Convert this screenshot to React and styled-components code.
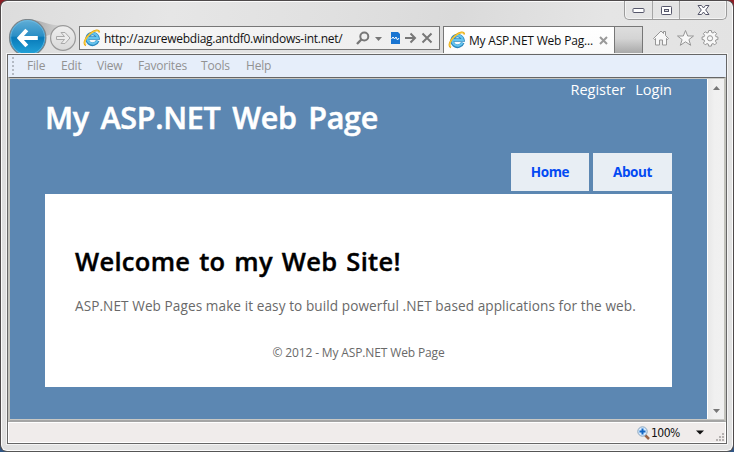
import React from "react";
import styled, { createGlobalStyle } from "styled-components";

const Global = createGlobalStyle`
  * { box-sizing: border-box; }
  html, body { margin: 0; padding: 0; overflow: hidden; }
  body { background: linear-gradient(#8e1c24 0, #8e1c24 40px, #315685 41px); font-family: "Open Sans", "Noto Sans", sans-serif; }
  svg { display: block; flex: none; }
`;

const Window = styled.div`
  width: 734px;
  height: 452px;
  display: flex;
  flex-direction: column;
  border: 1px solid #4e4a4b;
  border-bottom-color: #555;
  border-radius: 7px;
  background: linear-gradient(100deg, #dcdcdc 0, #e6e6e6 170px, #e0e0e0 330px, #dadada 450px, #e5e5e5 600px, #e2e2e2 100%);
  box-shadow: inset 0 0 0 1px #fbfbfb;
  padding: 0 6px 7px;
`;

const TitleBar = styled.div`
  height: 19px;
  display: flex;
  justify-content: flex-end;
  flex: none;
`;

const Caption = styled.div`
  display: flex;
  width: 103px;
  height: 19px;
  border: 1px solid #9b9b9b;
  border-top: none;
  border-radius: 0 0 5px 5px;
  box-shadow: inset 0 0 0 1px #f3f3f3;
`;

const CaptionButton = styled.div`
  width: ${(p) => p.$w}px;
  display: flex;
  align-items: center;
  justify-content: center;
  border-right: ${(p) => (p.$last ? "none" : "1px solid #a5a5a5")};
`;

const NavBar = styled.div`
  height: 34px;
  flex: none;
  display: flex;
  align-items: flex-start;
`;

const NavButtons = styled.div`
  width: 72px;
  height: 34px;
  flex: none;
  overflow: hidden;
  margin-top: -1px;
`;

const Address = styled.div`
  width: 361px;
  height: 24px;
  margin-top: 6px;
  flex: none;
  border: 1px solid #777;
  background: linear-gradient(90deg, #f7f7f7, #eee);
  display: flex;
  align-items: center;
  padding-left: 3px;
`;

const Label = styled.span`
  font-size: ${(p) => p.$size}px;
  letter-spacing: ${(p) => p.$track || 0}px;
  line-height: 16px;
  color: ${(p) => p.$color || "#111"};
  white-space: nowrap;
`;

const Url = styled(Label)`
  width: 250px;
  margin-left: 3px;
  margin-top: 1px;
`;

const AddressTools = styled.div`
  display: flex;
  align-items: center;
`;

const Tab = styled.div`
  width: 172px;
  height: 27px;
  margin: 6px 0 0 3px;
  border: 1px solid #777;
  border-bottom: none;
  background: linear-gradient(#fff, #fbfbfb);
  display: flex;
  align-items: center;
  padding-left: 4px;
  flex: none;
`;

const TabTitle = styled(Label)`
  width: 130px;
  margin-left: 3px;
  margin-top: 1px;
`;

const NewTab = styled.div`
  width: 28px;
  height: 27px;
  margin-top: 6px;
  border: 1px solid #777;
  border-left: none;
  border-bottom: none;
  background: linear-gradient(#dedede, #d4d4d4 45%, #a9a9a9);
  flex: none;
`;

const Commands = styled.div`
  display: flex;
  gap: 6px;
  margin: 9px 0 0 9px;
`;

const Client = styled.div`
  flex: 1;
  display: flex;
  flex-direction: column;
  border: 1px solid #666;
  outline: 1px solid #f4f4f4;
  min-height: 0;
`;

const MenuBar = styled.div`
  height: 22px;
  flex: none;
  background: #e6eefa;
  display: flex;
  align-items: center;
  padding-left: 4px;
`;

const MenuItem = styled(Label)`
  width: ${(p) => p.$w}px;
`;

const Viewport = styled.div`
  height: 345px;
  flex: none;
  display: flex;
  border: 2px solid #c3c3bd;
  border-top: 1px solid #666;
  border-bottom-color: #a5a5a5;
  box-shadow: inset 0 1px #c8c8c4, inset 0 -1px #c8c8c4;
  padding-top: 1px;
  padding-bottom: 1px;
`;

const Page = styled.div`
  flex: 1;
  min-width: 0;
  background: #5c87b2;
  padding: 0 35px;
`;

const SiteHeader = styled.header`
  height: 115px;
  display: grid;
  grid-template-rows: 21px 53px 38px;
`;

const Account = styled.div`
  display: flex;
  justify-content: flex-end;
  gap: 10px;
  padding-top: 3px;
`;

const SiteTitle = styled.h1`
  margin: 0;
  font-size: 30.5px;
  line-height: 34px;
  font-weight: 600;
  letter-spacing: -0.3px;
  word-spacing: 4px;
  -webkit-text-stroke: 0.5px #fff;
  color: #fff;
  white-space: nowrap;
`;

const SiteNav = styled.nav`
  display: flex;
  justify-content: flex-end;
  gap: 4px;
`;

const NavLink = styled.a`
  width: ${(p) => p.$w}px;
  height: 38px;
  display: flex;
  align-items: center;
  justify-content: center;
  background: #e8eef4;
  color: #034af3;
  font-size: 13.5px;
  font-weight: 700;
  letter-spacing: -0.4px;
`;

const Card = styled.main`
  height: 193px;
  background: #fff;
  padding: 49px 30px 0;
`;

const Heading = styled.h2`
  margin: 0;
  font-size: 25.5px;
  line-height: 36px;
  font-weight: 600;
  color: #000;
  -webkit-text-stroke: 0.4px #000;
  white-space: nowrap;
  letter-spacing: 0.3px;
  word-spacing: 2px;
`;

const Paragraph = styled.p`
  margin: 17px 0 0;
  font-size: 13.6px;
  line-height: 20px;
  color: #696969;
  white-space: nowrap;
  letter-spacing: 0.08px;
`;

const Footer = styled.footer`
  margin-top: 27px;
  font-size: 12px;
  line-height: 20px;
  color: #696969;
  text-align: center;
  white-space: nowrap;
  letter-spacing: -0.14px;
`;

const ScrollBar = styled.div`
  width: 17px;
  flex: none;
  border-left: 1px solid #fff;
  background: linear-gradient(90deg, #e8e8e8, #f0f0f0 40%, #f1f1f1);
  display: flex;
  flex-direction: column;
  justify-content: space-between;
  align-items: center;
  padding: 6px 0 5px;
`;

const StatusBar = styled.div`
  flex: 1;
  border: 1px solid #fff;
  background: #f0eceb;
  display: flex;
  align-items: center;
  justify-content: flex-end;
`;

const Zoom = styled(Label)`
  font-family: "DejaVu Sans Condensed", "DejaVu Sans", sans-serif;
  width: 45px;
  margin-left: 1px;
`;

const Grip = styled.svg`
  align-self: flex-end;
  margin-left: 12px;
`;

const IELogo = () => (
  <svg width="18" height="18" viewBox="0 0 18 18" fill="none">
    <path d="M14.700 11.600A5.400 5.400 0 1 1 14.900 9H5" stroke="#2a86bd" strokeWidth="3.600" />
    <path d="M14.400 11.600A5.200 5.200 0 1 1 14.800 9H5" stroke="#65c4ee" strokeWidth="2.200" />
    <path d="M3 16.400C-.3 15 2.200 8.800 7.200 4.600 11.600 1 16.300.1 16.200 3.500" stroke="#e7a813" strokeWidth="1.800" />
    <path d="M2.700 15.800C.4 14 2.700 8.800 7.200 5 11 2 15 .8 16 2.600" stroke="#ffdc50" strokeWidth=".8" />
  </svg>
);

const BackForward = () => (
  <svg width="72" height="34" viewBox="7 19 72 34">
    <defs>
      <linearGradient id="back" x1="0" y1="0" x2="0" y2="1">
        <stop offset="0" stopColor="#62aed6" />
        <stop offset=".45" stopColor="#2b8fc6" />
        <stop offset=".5" stopColor="#087ab9" />
        <stop offset="1" stopColor="#25a7dc" />
      </linearGradient>
      <linearGradient id="fwd" x1="0" y1="0" x2="0" y2="1">
        <stop offset="0" stopColor="#efefef" />
        <stop offset="1" stopColor="#d9d9d9" />
      </linearGradient>
      <linearGradient id="bridge" x1="0" y1="0" x2="1" y2="0">
        <stop offset="0" stopColor="#a5a5a5" />
        <stop offset="1" stopColor="#d6d6d6" />
      </linearGradient>
    </defs>
    <path d="M31 19.500C43 21 48 25.500 62 25.500L52 34 46 36Z" fill="url(#bridge)" />
    <circle cx="27.700" cy="37.700" r="18.200" fill="url(#back)" stroke="#7c858a" strokeWidth="1.200" />
    <circle cx="27.700" cy="37.700" r="17" fill="none" stroke="#71bfe5" strokeWidth=".7" />
    <path d="M26.800 30 19.500 38l7.300 8M20 38h17.800" fill="none" stroke="#fff" strokeWidth="4" />
    <circle cx="63" cy="38" r="12.400" fill="url(#fwd)" stroke="#999" strokeWidth="1.200" />
    <path d="M56.500 36.500h8l-3.500-4h4l5 5.500-5 5.500h-4l3.500-4h-8z" fill="#ececec" stroke="#a9a9a9" />
  </svg>
);

const AddressIcons = () => (
  <svg width="80" height="18" viewBox="355 29 80 18" fill="none" stroke="#777" strokeWidth="2">
    <circle cx="365.300" cy="36.500" r="4" />
    <path d="M362.300 39.500 358 44" strokeWidth="2.400" />
    <path d="M376 37h7l-3.500 4z" fill="#777" stroke="none" />
    <path d="M392 32h7l2 2v10h-9z" fill="#1874d1" stroke="none" />
    <path d="M392.500 39l1.500-2 1.500 2 1.500-2 1.500 3 1.500-2" stroke="#fff" strokeWidth="1" />
    <path d="M406 38h9M411.500 33.500l4.500 4.500-4.500 4.500" />
    <path d="M423.500 33.500l9 9M432.500 33.500l-9 9" />
  </svg>
);

const CommandIcons = () => (
  <Commands>
    <svg width="18" height="18" viewBox="0 0 18 18" fill="#f8f8f8" stroke="#969696">
      <path d="M1.500 9.500 9 2l2.500 2.500V2.500h2v4l3 3-1 1-1-1v6.500H10.500V11h-3v5h-4V9.500l-1 1z" />
    </svg>
    <svg width="19" height="18" viewBox="0 0 19 18" fill="#f8f8f8" stroke="#969696">
      <path d="M9.500 1.500 11.700 7h5.800l-4.600 3.600 1.800 5.700-5.200-3.500-5.200 3.500 1.800-5.700L1.500 7h5.800z" />
    </svg>
    <svg width="18" height="18" viewBox="0 0 18 18" fill="#f8f8f8" stroke="#969696">
      <path d="M7.700 1.500h2.600l.4 2 1.300.5 1.800-1.200 1.800 1.800L14.400 6.400l.5 1.300 2 .3v2.500l-2 .4-.5 1.300 1.200 1.800-1.800 1.800-1.800-1.200-1.300.5-.4 2H7.700l-.4-2-1.300-.5-1.800 1.200L2.400 14l1.200-1.800-.5-1.300-2-.4V8l2-.3.5-1.300L2.400 4.600l1.800-1.800L6 4l1.300-.5z" />
      <circle cx="9" cy="9.300" r="2.600" />
    </svg>
  </Commands>
);

const MENU = [["File", 34], ["Edit", 36], ["View", 41], ["Favorites", 63], ["Tools", 45], ["Help", 40]];

export default function App() {
  return (
    <>
      <Global />
      <Window>
        <TitleBar>
          <Caption>
            <CaptionButton $w={28}>
              <svg width="13" height="7" viewBox="0 0 13 7"><rect x="1" y="1.500" width="11" height="4" rx=".8" fill="#fff" stroke="#55566a" /></svg>
            </CaptionButton>
            <CaptionButton $w={27}>
              <svg width="13" height="11" viewBox="0 0 13 11"><rect x="1.500" y="1.500" width="10" height="8" rx=".8" fill="#fff" stroke="#55566a" /><rect x="4.500" y="4.500" width="4" height="2" fill="#ddd" stroke="#55566a" /></svg>
            </CaptionButton>
            <CaptionButton $w={46} $last>
              <svg width="13" height="12" viewBox="0 0 13 12"><path d="M1 1.500h3.500l2 2.500 2-2.500H12L8.700 6l3.300 4.500H8.500L6.500 8l-2 2.500H1L4.300 6z" fill="#fff" stroke="#55566a" /></svg>
            </CaptionButton>
          </Caption>
        </TitleBar>
        <NavBar>
          <NavButtons><BackForward /></NavButtons>
          <Address>
            <IELogo />
            <Url $size={12} $track={-0.27}>http://azurewebdiag.antdf0.windows-int.net/</Url>
            <AddressTools><AddressIcons /></AddressTools>
          </Address>
          <Tab>
            <IELogo />
            <TabTitle $size={12} $track={-0.2}>My ASP.NET Web Pag...</TabTitle>
            <svg width="9" height="9" viewBox="0 0 9 9"><path d="M1 1l7 7M8 1 1 8" stroke="#9a9a9a" strokeWidth="2" /></svg>
          </Tab>
          <NewTab />
          <CommandIcons />
        </NavBar>
        <Client>
          <MenuBar>
            <svg width="15" height="20" viewBox="0 0 15 20"><path d="M1 1v18" stroke="#b3bac4" strokeWidth="2" strokeDasharray="2 2" /></svg>
            {MENU.map(([name, w]) => (
              <MenuItem key={name} $w={w} $size={12} $track={-0.2} $color="#929292">{name}</MenuItem>
            ))}
          </MenuBar>
          <Viewport>
            <Page>
              <SiteHeader>
                <Account>
                  <Label $size={14.5} $color="#fff">Register</Label>
                  <Label $size={14.5} $color="#fff">Login</Label>
                </Account>
                <SiteTitle>My ASP.NET Web Page</SiteTitle>
                <SiteNav>
                  <NavLink $w={78}>Home</NavLink>
                  <NavLink $w={79}>About</NavLink>
                </SiteNav>
              </SiteHeader>
              <Card>
                <Heading>Welcome to my Web Site!</Heading>
                <Paragraph>ASP.NET Web Pages make it easy to build powerful .NET based applications for the web.</Paragraph>
                <Footer>© 2012 - My ASP.NET Web Page</Footer>
              </Card>
            </Page>
            <ScrollBar>
              <svg width="9" height="6" viewBox="0 0 9 6"><path d="M1 5 4.500 1 8 5z" fill="#777" /></svg>
              <svg width="9" height="6" viewBox="0 0 9 6"><path d="M1 1h7L4.500 5z" fill="#777" /></svg>
            </ScrollBar>
          </Viewport>
          <StatusBar>
            <svg width="13" height="14" viewBox="0 0 13 14">
              <path d="M8 9l4 4" stroke="#9b6547" strokeWidth="2.500" />
              <circle cx="5.500" cy="5.500" r="4.700" fill="#d5eaff" stroke="#8aa5bd" />
              <path d="M5.500 2.500v6M2.500 5.500h6" stroke="#1266c4" strokeWidth="2" />
            </svg>
            <Zoom $size={12} $track={-0.5}>100%</Zoom>
            <svg width="8" height="5" viewBox="0 0 8 5"><path d="M0 .5h8L4 4.500z" fill="#111" /></svg>
            <Grip width="9" height="9" viewBox="0 0 9 9" fill="#b5b1b0">
              <path d="M6 0h2v2H6zM3 3h2v2H3zM6 3h2v2H6zM0 6h2v2H0zM3 6h2v2H3zM6 6h2v2H6z" />
            </Grip>
          </StatusBar>
        </Client>
      </Window>
    </>
  );
}
